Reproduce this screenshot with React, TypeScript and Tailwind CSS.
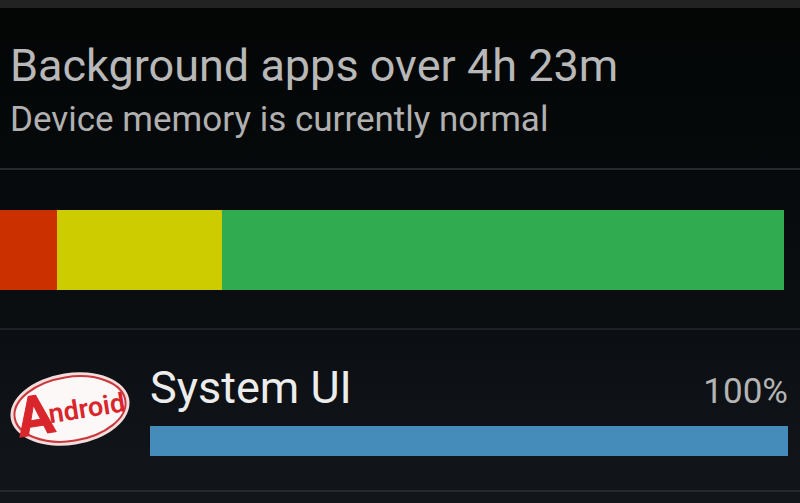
interface Segment {
  label: string;
  share: number;
  color: string;
}

interface ProcessRowProps {
  name: string;
  percent: number;
}

const memorySegments: Segment[] = [
  { label: "Critical", share: 57, color: "bg-[#cb3000]" },
  { label: "Moderate", share: 165, color: "bg-[#cccc00]" },
  { label: "Normal", share: 561, color: "bg-[#31ab50]" },
];

function AndroidBadge() {
  return (
    <svg className="w-[120px] h-[78px] shrink-0 overflow-visible" viewBox="0 0 120 78" role="img" aria-label="Android">
      <g transform="rotate(-9 60 39)">
        <ellipse cx="60" cy="39" rx="60" ry="36" fill="#f3dcdc" />
        <ellipse cx="60" cy="39" rx="56" ry="32" fill="#fdf8f8" stroke="#c9383c" strokeWidth="2" />
      </g>
      <g transform="rotate(-9 60 39)" fill="#d9262c" fontFamily="'Roboto', sans-serif" fontWeight="700">
        <text x="6" y="59" fontSize="55" stroke="#d9262c" strokeWidth="1">A</text>
        <text x="38" y="50" fontSize="27" fontWeight="600">ndroid</text>
      </g>
    </svg>
  );
}

function MemoryBar() {
  return (
    <div className="h-20 flex mr-4">
      {memorySegments.map((segment) => (
        <div
          key={segment.label}
          className={segment.color}
          style={{ flexGrow: segment.share, flexBasis: 0 }}
        />
      ))}
    </div>
  );
}

function ProcessRow({ name, percent }: ProcessRowProps) {
  return (
    <li className="flex items-center gap-5 pl-[10px] pr-3 pt-8 pb-[34px] border-b-2 border-[#26292c]">
      <AndroidBadge />
      <div className="grow min-w-0">
        <div className="flex items-baseline justify-between">
          <h2 className="text-[45px] leading-[52px] text-[#ececec]">{name}</h2>
          <span className="text-[35px] leading-[44px] text-[#b4b4b4]">{percent}%</span>
        </div>
        <div className="h-[30px] mt-3">
          <div className="h-full bg-[#468cbb]" style={{ width: `${percent}%` }} />
        </div>
      </div>
    </li>
  );
}

export default function App() {
  return (
    <main className="min-h-screen bg-linear-to-b from-[#030505] to-[#12151a] font-['Roboto',sans-serif]">
      <div className="h-2 bg-[#222222]" />

      {/* Summary */}
      <header className="px-[10px] pt-8 pb-[26px] border-b-2 border-[#26282a]">
        <h1 className="text-[45px] leading-[52px] text-[#b8b8b8]">Background apps over 4h 23m</h1>
        <p className="mt-1.5 text-[35px] leading-[44px] text-[#b0b0b0]">Device memory is currently normal</p>
      </header>

      {/* Memory state over time */}
      <section className="pt-10 pb-[38px] border-b-2 border-[#1e2023]">
        <MemoryBar />
      </section>

      <ul>
        <ProcessRow name="System UI" percent={100} />
      </ul>
    </main>
  );
}
